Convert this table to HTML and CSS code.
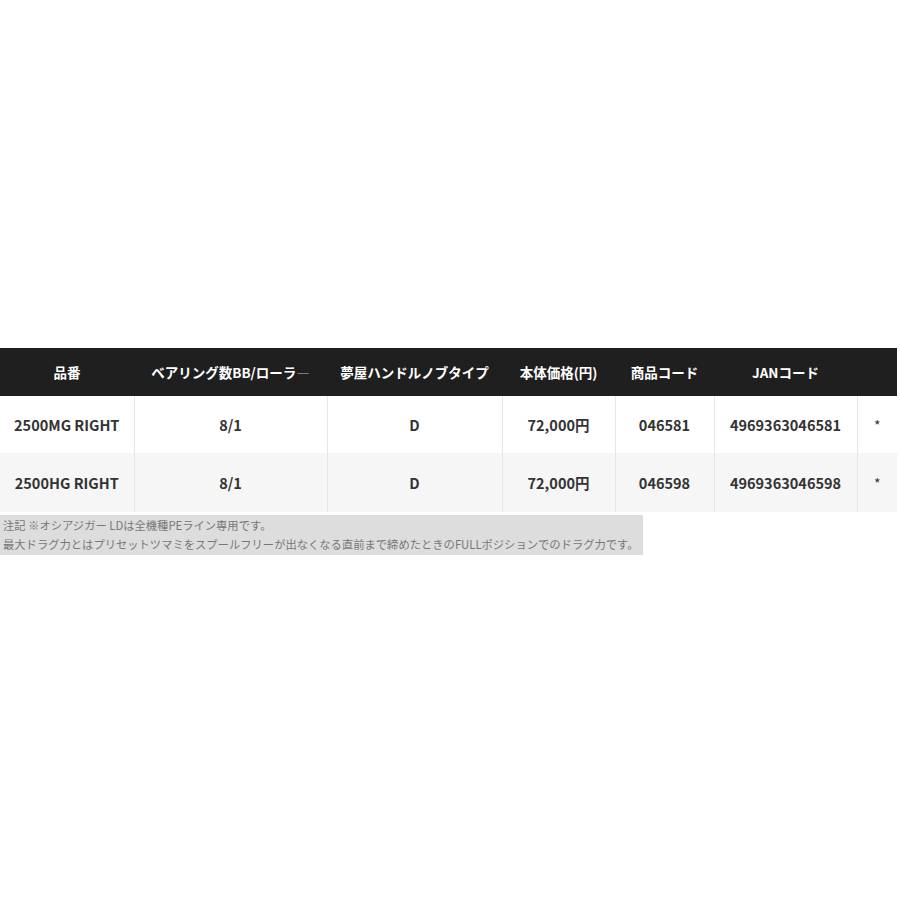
FILE: index.html
```html
<!DOCTYPE html>
<html lang="ja">
<head>
<meta charset="utf-8">
<title>スペック</title>
<link rel="stylesheet" href="styles.css">
</head>
<body>
<div class="page">
  <table class="spec">
    <colgroup>
      <col class="c1"><col class="c2"><col class="c3"><col class="c4"><col class="c5"><col class="c6"><col class="c7">
    </colgroup>
    <thead>
      <tr>
        <th>品番</th>
        <th>ベアリング数BB/ローラ<span class="bar">―</span></th>
        <th>夢屋ハンドルノブタイプ</th>
        <th>本体価格(円)</th>
        <th>商品コード</th>
        <th>JANコード</th>
        <th></th>
      </tr>
    </thead>
    <tbody>
      <tr>
        <td>2500MG RIGHT</td>
        <td>8/1</td>
        <td>D</td>
        <td>72,000円</td>
        <td>046581</td>
        <td>4969363046581</td>
        <td class="star">*</td>
      </tr>
      <tr class="alt">
        <td>2500HG RIGHT</td>
        <td>8/1</td>
        <td>D</td>
        <td>72,000円</td>
        <td>046598</td>
        <td>4969363046598</td>
        <td class="star">*</td>
      </tr>
    </tbody>
  </table>
  <div class="note">
    <p>注記 ※オシアジガー LDは全機種PEライン専用です。</p>
    <p>最大ドラグ力とはプリセットツマミをスプールフリーが出なくなる直前まで締めたときのFULLポジションでのドラグ力です。</p>
  </div>
</div>
</body>
</html>
```

FILE: styles.css
```css
html, body {
  margin: 0;
  padding: 0;
  background: #ffffff;
}
body {
  font-family: "Noto Sans CJK JP", "Noto Sans", sans-serif;
  color: #333333;
}
.page {
  padding-top: 348px;
}
.spec {
  width: 897px;
  border-collapse: collapse;
  table-layout: fixed;
}
.c1 { width: 134px; }
.c2 { width: 193px; }
.c3 { width: 175px; }
.c4 { width: 113px; }
.c5 { width: 99px; }
.c6 { width: 143px; }
.c7 { width: 40px; }
.spec th {
  background: #1f1f1f;
  color: #ffffff;
  font-size: 13.5px;
  font-weight: 700;
  height: 48px;
  padding: 0;
  text-align: center;
  white-space: nowrap;
}
.spec th .bar {
  color: #bdbdbd;
  font-weight: 400;
}
.spec td {
  font-size: 14.5px;
  font-weight: 700;
  text-align: center;
  height: 57px;
  padding: 0;
  border-left: 1px solid #e6e6e6;
  white-space: nowrap;
  color: #333333;
}
.spec td:first-child {
  border-left: none;
}
.spec tr.alt td {
  background: #f6f6f6;
  height: 59px;
}
.spec td.star {
  font-weight: 400;
  font-size: 14px;
}
.note {
  box-sizing: border-box;
  width: 643px;
  margin-top: 3px;
  background: #dddddd;
  color: #777777;
  font-size: 11.3px;
  line-height: 19px;
  padding: 1px 0 1px 3px;
}
.note p {
  margin: 0;
  white-space: nowrap;
}
```
